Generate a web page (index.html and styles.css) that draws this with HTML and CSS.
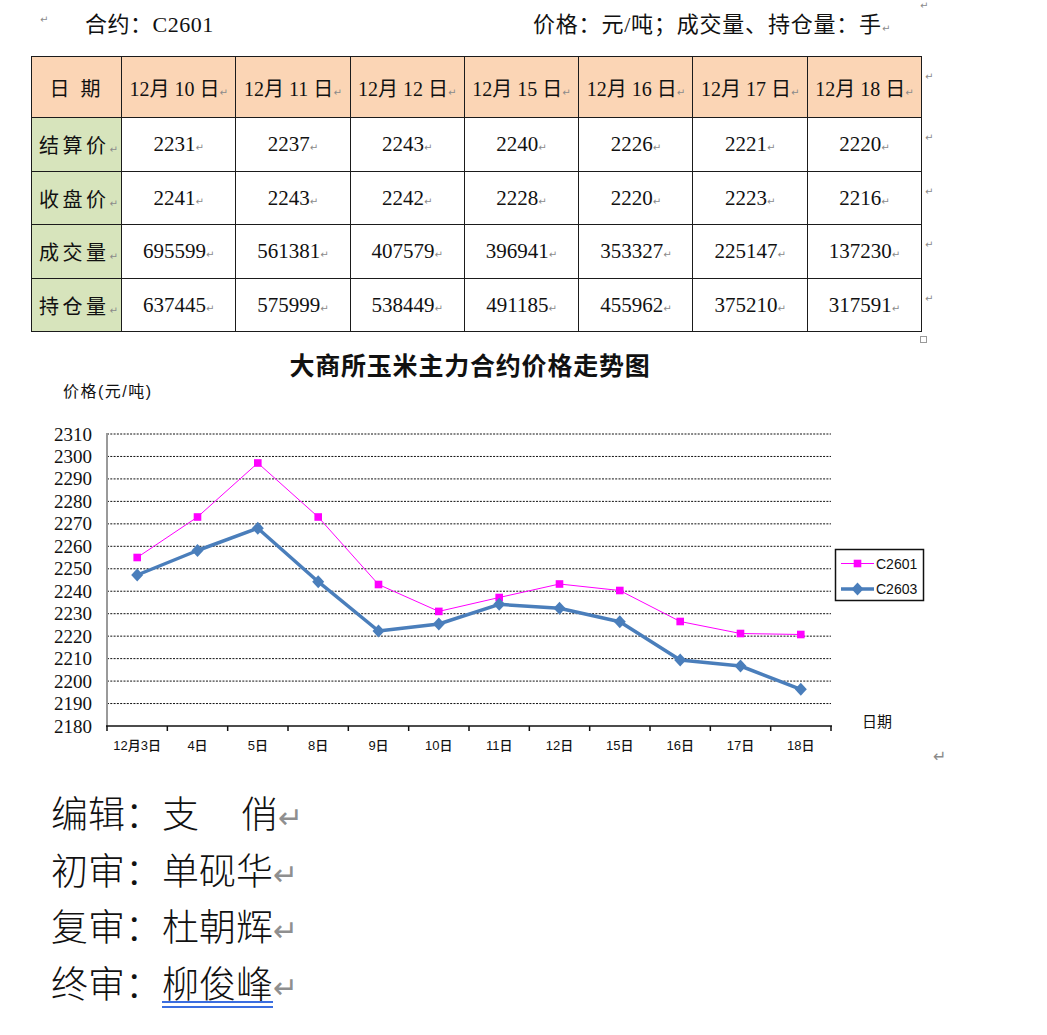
FILE: index.html
```html
<!DOCTYPE html>
<html lang="zh-CN">
<head>
<meta charset="utf-8">
<title>大商所玉米主力合约价格走势</title>
<link rel="stylesheet" href="styles.css">
</head>
<body>
<header class="topline">
  <span class="rm lead">↵</span>
  <span class="contract">合约：C2601</span>
  <span class="units">价格：元/吨；成交量、持仓量：手<span class="rm">↵</span></span>
  <span class="rm corner">↵</span>
</header>

<table class="quotes">
  <colgroup>
    <col class="c-label"><col class="c-day"><col class="c-day"><col class="c-day"><col class="c-day"><col class="c-day"><col class="c-day"><col class="c-day"><col class="c-mark">
  </colgroup>
  <tr class="head">
    <th class="label">日 期</th>
    <th>12月 10 日<span class="rm">↵</span></th>
    <th>12月 11 日<span class="rm">↵</span></th>
    <th>12月 12 日<span class="rm">↵</span></th>
    <th>12月 15 日<span class="rm">↵</span></th>
    <th>12月 16 日<span class="rm">↵</span></th>
    <th>12月 17 日<span class="rm">↵</span></th>
    <th>12月 18 日<span class="rm">↵</span></th>
    <td class="mark"><span class="rm">↵</span></td>
  </tr>
  <tr class="r1">
    <th class="label">结算价<span class="rm">↵</span></th>
    <td>2231<span class="rm">↵</span></td><td>2237<span class="rm">↵</span></td><td>2243<span class="rm">↵</span></td><td>2240<span class="rm">↵</span></td><td>2226<span class="rm">↵</span></td><td>2221<span class="rm">↵</span></td><td>2220<span class="rm">↵</span></td>
    <td class="mark"><span class="rm">↵</span></td>
  </tr>
  <tr class="r2">
    <th class="label">收盘价<span class="rm">↵</span></th>
    <td>2241<span class="rm">↵</span></td><td>2243<span class="rm">↵</span></td><td>2242<span class="rm">↵</span></td><td>2228<span class="rm">↵</span></td><td>2220<span class="rm">↵</span></td><td>2223<span class="rm">↵</span></td><td>2216<span class="rm">↵</span></td>
    <td class="mark"><span class="rm">↵</span></td>
  </tr>
  <tr class="r3">
    <th class="label">成交量<span class="rm">↵</span></th>
    <td>695599<span class="rm">↵</span></td><td>561381<span class="rm">↵</span></td><td>407579<span class="rm">↵</span></td><td>396941<span class="rm">↵</span></td><td>353327<span class="rm">↵</span></td><td>225147<span class="rm">↵</span></td><td>137230<span class="rm">↵</span></td>
    <td class="mark"><span class="rm">↵</span></td>
  </tr>
  <tr class="r4">
    <th class="label">持仓量<span class="rm">↵</span></th>
    <td>637445<span class="rm">↵</span></td><td>575999<span class="rm">↵</span></td><td>538449<span class="rm">↵</span></td><td>491185<span class="rm">↵</span></td><td>455962<span class="rm">↵</span></td><td>375210<span class="rm">↵</span></td><td>317591<span class="rm">↵</span></td>
    <td class="mark"><span class="rm">↵</span></td>
  </tr>
</table>
<div class="handle"></div>

<svg class="chart" width="1047" height="428" viewBox="0 342 1047 428" xmlns="http://www.w3.org/2000/svg">
  <defs>
    <rect id="sq" x="-3.8" y="-3.8" width="7.6" height="7.6" fill="#ff00ff"/>
    <polygon id="dm" points="0,-6.5 6,0 0,6.5 -6,0" fill="#4a7ebb"/>
  </defs>
  <text class="title" x="470" y="375" text-anchor="middle">大商所玉米主力合约价格走势图</text>
  <text class="ytitle" x="63" y="397">价格(元/吨)</text>

  <g class="grid">
    <line x1="107" x2="831" y1="434" y2="434"/>
    <line x1="107" x2="831" y1="456.46" y2="456.46"/>
    <line x1="107" x2="831" y1="478.92" y2="478.92"/>
    <line x1="107" x2="831" y1="501.38" y2="501.38"/>
    <line x1="107" x2="831" y1="523.85" y2="523.85"/>
    <line x1="107" x2="831" y1="546.31" y2="546.31"/>
    <line x1="107" x2="831" y1="568.77" y2="568.77"/>
    <line x1="107" x2="831" y1="591.23" y2="591.23"/>
    <line x1="107" x2="831" y1="613.69" y2="613.69"/>
    <line x1="107" x2="831" y1="636.15" y2="636.15"/>
    <line x1="107" x2="831" y1="658.62" y2="658.62"/>
    <line x1="107" x2="831" y1="681.08" y2="681.08"/>
    <line x1="107" x2="831" y1="703.54" y2="703.54"/>
  </g>

  <line class="yaxis" x1="107" x2="107" y1="433" y2="726"/>
  <g class="xaxis">
    <line x1="106" x2="832" y1="726" y2="726"/>
    <line x1="107" x2="107" y1="726" y2="731"/>
    <line x1="167.33" x2="167.33" y1="726" y2="731"/>
    <line x1="227.67" x2="227.67" y1="726" y2="731"/>
    <line x1="288" x2="288" y1="726" y2="731"/>
    <line x1="348.33" x2="348.33" y1="726" y2="731"/>
    <line x1="408.67" x2="408.67" y1="726" y2="731"/>
    <line x1="469" x2="469" y1="726" y2="731"/>
    <line x1="529.33" x2="529.33" y1="726" y2="731"/>
    <line x1="589.67" x2="589.67" y1="726" y2="731"/>
    <line x1="650" x2="650" y1="726" y2="731"/>
    <line x1="710.33" x2="710.33" y1="726" y2="731"/>
    <line x1="770.67" x2="770.67" y1="726" y2="731"/>
    <line x1="831" x2="831" y1="726" y2="731"/>
  </g>

  <g class="ylab" text-anchor="end">
    <text x="92" y="440.5">2310</text>
    <text x="92" y="463">2300</text>
    <text x="92" y="485.4">2290</text>
    <text x="92" y="507.9">2280</text>
    <text x="92" y="530.3">2270</text>
    <text x="92" y="552.8">2260</text>
    <text x="92" y="575.3">2250</text>
    <text x="92" y="597.7">2240</text>
    <text x="92" y="620.2">2230</text>
    <text x="92" y="642.6">2220</text>
    <text x="92" y="665.1">2210</text>
    <text x="92" y="687.6">2200</text>
    <text x="92" y="710">2190</text>
    <text x="92" y="732.5">2180</text>
  </g>

  <g class="xlab" text-anchor="middle">
    <text x="137.2" y="750">12月3日</text>
    <text x="197.5" y="750">4日</text>
    <text x="257.8" y="750">5日</text>
    <text x="318.2" y="750">8日</text>
    <text x="378.5" y="750">9日</text>
    <text x="438.8" y="750">10日</text>
    <text x="499.2" y="750">11日</text>
    <text x="559.5" y="750">12日</text>
    <text x="619.8" y="750">15日</text>
    <text x="680.2" y="750">16日</text>
    <text x="740.5" y="750">17日</text>
    <text x="800.8" y="750">18日</text>
  </g>
  <text class="xtitle" x="862" y="727">日期</text>

  <polyline class="s1" points="137.2,557.5 197.5,517 257.8,463 318.2,517 378.5,584.5 438.8,611.4 499.2,597.5 559.5,584 619.8,590.5 680.2,621.5 740.5,633.5 800.8,634.5"/>
  <g>
    <use href="#sq" x="137.2" y="557.5"/><use href="#sq" x="197.5" y="517"/><use href="#sq" x="257.8" y="463"/><use href="#sq" x="318.2" y="517"/>
    <use href="#sq" x="378.5" y="584.5"/><use href="#sq" x="438.8" y="611.4"/><use href="#sq" x="499.2" y="597.5"/><use href="#sq" x="559.5" y="584"/>
    <use href="#sq" x="619.8" y="590.5"/><use href="#sq" x="680.2" y="621.5"/><use href="#sq" x="740.5" y="633.5"/><use href="#sq" x="800.8" y="634.5"/>
  </g>

  <polyline class="s2" points="137.2,575 197.5,550.5 257.8,528.3 318.2,581.7 378.5,631 438.8,624 499.2,604.3 559.5,608.3 619.8,621.7 680.2,660 740.5,666 800.8,689.3"/>
  <g>
    <use href="#dm" x="137.2" y="575"/><use href="#dm" x="197.5" y="550.5"/><use href="#dm" x="257.8" y="528.3"/><use href="#dm" x="318.2" y="581.7"/>
    <use href="#dm" x="378.5" y="631"/><use href="#dm" x="438.8" y="624"/><use href="#dm" x="499.2" y="604.3"/><use href="#dm" x="559.5" y="608.3"/>
    <use href="#dm" x="619.8" y="621.7"/><use href="#dm" x="680.2" y="660"/><use href="#dm" x="740.5" y="666"/><use href="#dm" x="800.8" y="689.3"/>
  </g>

  <g class="legend">
    <rect class="lbox" x="835.5" y="549.5" width="88" height="51"/>
    <line class="s1" x1="841" x2="874" y1="563.5" y2="563.5"/>
    <use href="#sq" x="857.5" y="563.5"/>
    <text class="ltext" x="876" y="568.5">C2601</text>
    <line class="s2" x1="841" x2="874" y1="589" y2="589"/>
    <use href="#dm" x="857.5" y="589"/>
    <text class="ltext" x="876" y="594">C2603</text>
  </g>

  <text class="cmark" x="933" y="762">↵</text>
</svg>

<section class="signoff">
  <p>编辑：支<span class="gap"></span>俏<span class="rm big">↵</span></p>
  <p>初审：单砚华<span class="rm big">↵</span></p>
  <p>复审：杜朝辉<span class="rm big">↵</span></p>
  <p>终审：<span class="check">柳俊峰</span><span class="rm big">↵</span></p>
</section>
</body>
</html>
```

FILE: styles.css
```css
html, body {
  margin: 0;
  padding: 0;
  background: #ffffff;
}

body {
  width: 1047px;
  height: 1035px;
  overflow: hidden;
  color: #111;
  font-family: "Liberation Serif", "Noto Sans CJK SC", serif;
}

.rm {
  font-family: "DejaVu Sans", sans-serif;
  color: #8a8a8a;
  font-size: 10px;
  font-weight: normal;
  letter-spacing: 0;
}

/* ---------- top line ---------- */
.topline {
  position: relative;
  height: 44px;
  display: flex;
  align-items: center;
  padding-left: 40px;
  font-size: 22px;
  letter-spacing: 0.5px;
}

.topline .lead {
  flex: 0 0 45px;
  margin-top: -6px;
}

.contract {
  flex: 0 0 448px;
}

.units {
  letter-spacing: 0.8px;
}

.topline .corner {
  position: absolute;
  left: 920px;
  top: 0;
}

/* ---------- table ---------- */
.quotes {
  margin: 12px 0 0 31px;
  border-collapse: collapse;
  table-layout: fixed;
  width: 910px;
}

.c-label { width: 90px; }
.c-day { width: 114.3px; }
.c-mark { width: 20px; }

.quotes th,
.quotes td {
  border: 1.5px solid #1b1b1b;
  padding: 0;
  text-align: center;
  vertical-align: middle;
  font-weight: normal;
  white-space: nowrap;
  overflow: hidden;
}

.quotes td {
  font-size: 21px;
}

.quotes tr.head { height: 61px; }
.quotes tr.r1 { height: 54px; }
.quotes tr.r2 { height: 53px; }
.quotes tr.r3 { height: 54px; }
.quotes tr.r4 { height: 53px; }

.quotes tr.head th {
  background: #fbd5b5;
  font-size: 20px;
}

.quotes th.label {
  background: #d7e4bc;
  font-size: 20px;
  letter-spacing: 3.5px;
  text-align: left;
  padding-left: 7px;
}

.quotes tr.head th.label {
  background: #fbd5b5;
  text-align: center;
  padding-left: 0;
  letter-spacing: 3px;
}

.quotes td.mark {
  border: none;
  text-align: left;
  vertical-align: top;
  padding: 4px 0 0 3px;
  overflow: visible;
}

.handle {
  width: 5px;
  height: 5px;
  margin: 4px 0 0 920px;
  border: 1px solid #9a9a9a;
}

/* ---------- chart ---------- */
.chart {
  display: block;
  margin-top: -1px;
}

.chart .title {
  font-family: "Noto Sans CJK SC", sans-serif;
  font-weight: 700;
  font-size: 25px;
  letter-spacing: 0.8px;
  fill: #111;
}

.chart .ytitle {
  font-family: "Liberation Sans", "Noto Sans CJK SC", sans-serif;
  font-size: 16px;
  letter-spacing: 1.5px;
  fill: #111;
}

.chart .xtitle {
  font-family: "Liberation Sans", "Noto Sans CJK SC", sans-serif;
  font-size: 15px;
  fill: #111;
}

.chart .grid line {
  stroke: #111;
  stroke-width: 1;
  stroke-dasharray: 2 1.3;
}

.chart .yaxis {
  stroke: #9a9a9a;
  stroke-width: 2;
}

.chart .xaxis line {
  stroke: #111;
  stroke-width: 1.5;
}

.chart .ylab text {
  font-family: "Liberation Serif", serif;
  font-size: 19px;
  fill: #111;
}

.chart .xlab text {
  font-family: "Liberation Sans", "Noto Sans CJK SC", sans-serif;
  font-size: 13px;
  font-weight: 500;
  fill: #111;
}

.chart .s1 {
  fill: none;
  stroke: #ff00ff;
  stroke-width: 1;
}

.chart .s2 {
  fill: none;
  stroke: #4a7ebb;
  stroke-width: 3.5;
  stroke-linejoin: round;
}

.chart .lbox {
  fill: #fff;
  stroke: #111;
  stroke-width: 1.5;
}

.chart .ltext {
  font-family: "Liberation Sans", sans-serif;
  font-size: 14px;
  fill: #111;
}

.chart .cmark {
  font-family: "DejaVu Sans", sans-serif;
  font-size: 16px;
  fill: #8a8a8a;
}

/* ---------- sign-off ---------- */
.signoff {
  margin-top: 14px;
  padding-left: 51px;
  font-family: "Noto Sans CJK SC", sans-serif;
  font-weight: 300;
  font-size: 37px;
  color: #111;
}

.signoff p {
  margin: 0;
  height: 56.5px;
  line-height: 56.5px;
  white-space: nowrap;
}

.signoff .gap {
  display: inline-block;
  width: 42px;
}

.signoff .rm.big {
  font-size: 30px;
  color: #8f8f8f;
}

.check {
  position: relative;
}

.check::after {
  content: "";
  position: absolute;
  left: 0;
  right: 0;
  bottom: 1px;
  height: 3px;
  border-top: 2px solid #3b6ee0;
  border-bottom: 2px solid #3b6ee0;
}
```
